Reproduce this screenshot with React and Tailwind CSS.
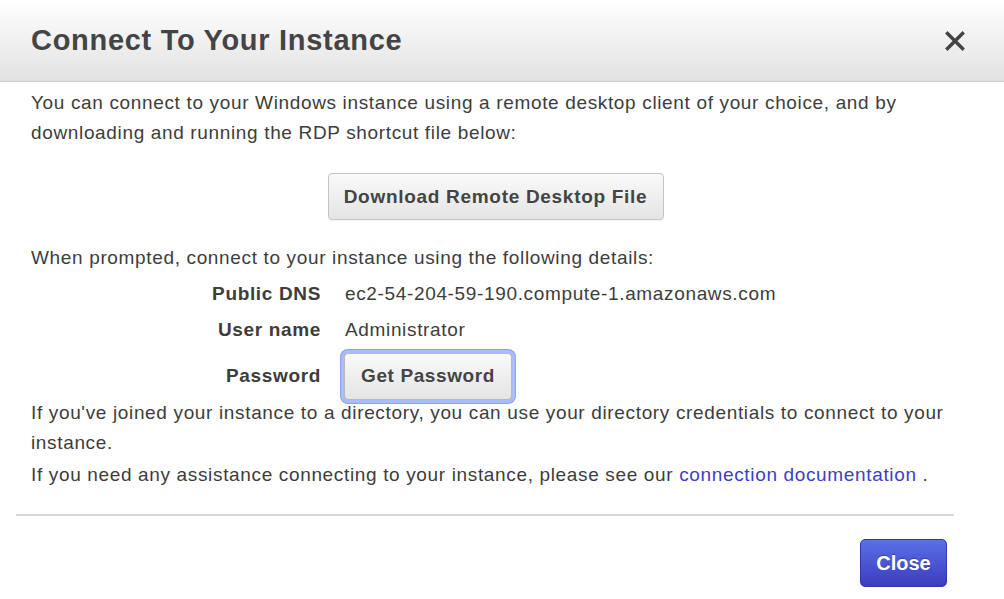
export default function App() {
  return (
    <div className="min-h-[599px] w-[1004px] bg-white font-['Liberation_Sans',Arial,sans-serif] text-[#3d3d3d]">
      {/* header */}
      <div className="flex h-[82px] items-center justify-between border-b border-[#cfcfcf] bg-gradient-to-b from-white to-[#e2e2e2] pl-[31px] pr-[34px]">
        <h1 className="text-[29px] font-bold tracking-[0.7px] text-[#444]">Connect To Your Instance</h1>
        <button className="flex h-[30px] w-[30px] items-center justify-center">
          <svg width="20" height="20" viewBox="0 0 20 20">
            <path d="M2.5 2.5L17.5 17.5M17.5 2.5L2.5 17.5" stroke="#444" strokeWidth="3.4" strokeLinecap="square" />
          </svg>
        </button>
      </div>

      {/* body */}
      <div className="pl-[31px] pr-[44px] pt-[6px] text-[19px] leading-[30px] tracking-[0.65px]">
        <p>
          You can connect to your Windows instance using a remote desktop client of your choice, and by
          <br />
          downloading and running the RDP shortcut file below:
        </p>

        <div className="mt-[25px] flex justify-center">
          <button className="h-[47px] w-[336px] rounded-[4px] border border-[#c4c4c4] bg-gradient-to-b from-[#fafafa] to-[#e4e4e4] text-[19px] font-bold tracking-[0.7px] text-[#444] shadow-[0_1px_0_#f4f4f4]">
            Download Remote Desktop File
          </button>
        </div>

        <p className="mt-[23px]">When prompted, connect to your instance using the following details:</p>

        <div className="mt-[3px]">
          <div className="flex h-[36px] items-center">
            <span className="w-[290px] text-right font-bold">Public DNS</span>
            <span className="ml-[24px]">ec2-54-204-59-190.compute-1.amazonaws.com</span>
          </div>
          <div className="flex h-[36px] items-center">
            <span className="w-[290px] text-right font-bold">User name</span>
            <span className="ml-[24px]">Administrator</span>
          </div>
          <div className="flex h-[56px] items-center">
            <span className="w-[290px] text-right font-bold">Password</span>
            <div className="ml-[20px] rounded-[7px] bg-[#a9bcfb] p-[3px] shadow-[0_0_0_1px_#8aa2f5]">
              <button className="h-[47px] w-[168px] rounded-[4px] border border-[#b9b9b9] bg-gradient-to-b from-[#fafafa] to-[#e4e4e4] text-[19px] font-bold tracking-[0.6px] text-[#444]">
                Get Password
              </button>
            </div>
          </div>
        </div>

        <p className="mt-[-6px]">
          If you've joined your instance to a directory, you can use your directory credentials to connect to your
          <br />
          instance.
        </p>
        <p className="mt-[2px]">
          If you need any assistance connecting to your instance, please see our{' '}
          <a className="text-[#3b40c4]">connection documentation</a> .
        </p>
      </div>

      {/* footer */}
      <div className="ml-[16px] mr-[50px] mt-[24px] border-t-2 border-[#d6d6d6] pt-[23px]">
        <div className="flex justify-end pr-[7px]">
          <button className="h-[48px] w-[87px] rounded-[5px] border border-[#3538a8] bg-gradient-to-b from-[#5b6fe6] to-[#3b3cbe] text-[20px] font-bold text-white [text-shadow:0_-1px_0_rgba(0,0,0,0.3)]">
            Close
          </button>
        </div>
      </div>
    </div>
  );
}
